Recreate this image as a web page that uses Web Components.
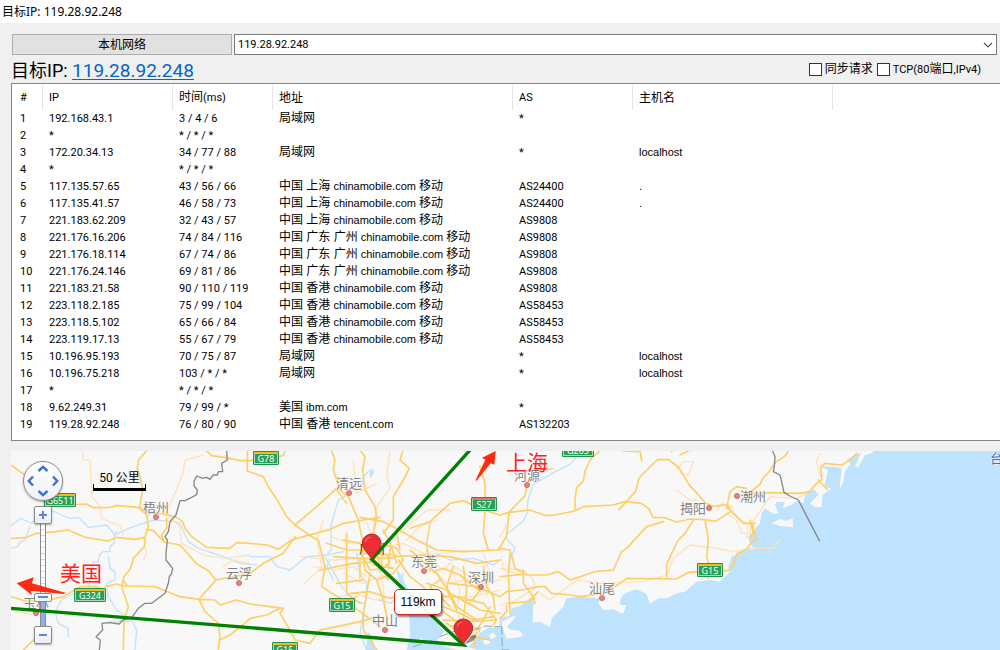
<!DOCTYPE html>
<html lang="zh-CN">
<head>
<meta charset="utf-8">
<title>目标IP: 119.28.92.248</title>
<style>
html, body { margin: 0; height: 100%; }
body { background: #f0f0f0; overflow: hidden; color: #000; font: 12px/16px Roboto, "Noto Sans CJK SC", sans-serif; }
</style>
</head>
<body>
<trace-window heading="目标IP: 119.28.92.248">
  <trace-toolbar slot="tools" address="119.28.92.248"></trace-toolbar>
  <hop-table></hop-table>
  <route-map slot="map">
    <map-shield style="left:242px;top:0" kind="g">G78</map-shield>
    <map-shield style="left:33px;top:42px" kind="g" wide>G6511</map-shield>
    <map-shield style="left:63px;top:137px" kind="g" wide>G324</map-shield>
    <map-shield style="left:318px;top:147px" kind="g">G15</map-shield>
    <map-shield style="left:261px;top:191px" kind="g">G15</map-shield>
    <map-shield style="left:460px;top:46px" kind="s">S27</map-shield>
    <map-shield style="left:551px;top:-8px" kind="g" wide>G205</map-shield>
    <map-shield style="left:686px;top:112px" kind="g">G15</map-shield>
    <map-city style="left:145px;top:66px" side="above">梧州</map-city>
    <map-city style="left:338px;top:42px" side="above">清远</map-city>
    <map-city style="left:516px;top:34px" side="above">河源</map-city>
    <map-city style="left:228px;top:132px" side="above">云浮</map-city>
    <map-city style="left:413px;top:120px" side="above">东莞</map-city>
    <map-city style="left:470px;top:136px" side="above">深圳</map-city>
    <map-city style="left:374px;top:179px" side="above">中山</map-city>
    <map-city style="left:591px;top:147px" side="above">汕尾</map-city>
    <map-city style="left:25px;top:162px" side="above">玉林</map-city>
    <map-city style="left:698px;top:57px" side="left">揭阳</map-city>
    <map-city style="left:726px;top:45px" side="right">潮州</map-city>
  </route-map>
</trace-window>

<script>
const sheet = css => `<style>${css}</style>`;
function define(name, html, setup) {
  customElements.define(name, class extends HTMLElement {
    constructor() {
      super();
      this.attachShadow({ mode: 'open' }).innerHTML = html;
    }
    connectedCallback() { if (setup) setup(this, this.shadowRoot); }
  });
}

/* ---------- Window frame ---------- */
define('trace-window', sheet(`
  :host { display: flex; flex-direction: column; height: 100vh; }
  header { background: #fff; height: 23px; line-height: 24px; padding-left: 2px; flex: none; font-family: "Noto Sans", "Noto Sans CJK SC", sans-serif; }
  main { flex: 1; display: flex; flex-direction: column; min-height: 0; padding: 11px 0 0 11px; }
  .map { flex: 1; display: flex; min-height: 0; padding-top: 10px; }
  ::slotted(route-map) { flex: 1; }
`) + `<header></header><main><slot name="tools"></slot><slot></slot><div class="map"><slot name="map"></slot></div></main>`,
(host, root) => { root.querySelector('header').textContent = host.getAttribute('heading'); });

/* ---------- Toolbar ---------- */
define('trace-toolbar', sheet(`
  :host { display: block; }
  .row { display: flex; align-items: center; }
  .pick { gap: 2px; padding: 0 3px 0 1px; }
  button { box-sizing: border-box; width: 220px; height: 21px; padding: 1px 0 0; border: 1px solid #adadad; background: #e1e1e1;
    font: 12px/18px Roboto, "Noto Sans CJK SC", sans-serif; color: #000; }
  .combo { flex: 1; position: relative; display: flex; }
  select { appearance: none; box-sizing: border-box; width: 100%; height: 21px; border: 1px solid #7a7a7a; border-radius: 0;
    background: #fff; color: #000; font: 11px/18px Roboto, sans-serif; padding: 0 20px 0 3px; }
  .combo svg { position: absolute; right: 4px; top: 8px; pointer-events: none; }
  .target { height: 28px; padding: 0 19px 0 0; }
  .big { flex: 1; font-size: 18px; line-height: 24px; padding-top: 4px; }
  a { font-size: 19px; color: #0066cc; text-decoration: underline; text-decoration-thickness: 1px; text-underline-offset: 2px; }
  label { display: flex; align-items: center; gap: 3px; margin-right: 4px; }
  label:last-child { margin-right: 0; }
  .latin { font-size: 11px; }
  input { appearance: none; box-sizing: border-box; width: 13px; height: 13px; margin: 0; border: 1px solid #333; background: #fff; }
  input:checked { background: #333; }
`) + `
  <div class="row pick">
    <button type="button">本机网络</button>
    <div class="combo">
      <select aria-label="目标IP"><option></option></select>
      <svg width="10" height="6" viewBox="0 0 10 6"><path d="M1 1l4 4 4-4" fill="none" stroke="#555" stroke-width="1.2"/></svg>
    </div>
  </div>
  <div class="row target">
    <div class="big">目标IP: <a href="#target"></a></div>
    <label><input type="checkbox"><span>同步请求</span></label>
    <label><input type="checkbox"><span><span class="latin">TCP(80</span>端口<span class="latin">,IPv4)</span></span></label>
  </div>`,
(host, root) => {
  root.querySelector('option').textContent = root.querySelector('a').textContent = host.getAttribute('address');
});

/* ---------- Hop table ---------- */
const CM = 'chinamobile.com 移动';
const HOPS = [
  ['192.168.43.1', '3 / 4 / 6', '局域网', '*', ''],
  ['*', '* / * / *', '', '', ''],
  ['172.20.34.13', '34 / 77 / 88', '局域网', '*', 'localhost'],
  ['*', '* / * / *', '', '', ''],
  ['117.135.57.65', '43 / 56 / 66', '中国 上海 ' + CM, 'AS24400', '.'],
  ['117.135.41.57', '46 / 58 / 73', '中国 上海 ' + CM, 'AS24400', '.'],
  ['221.183.62.209', '32 / 43 / 57', '中国 上海 ' + CM, 'AS9808', ''],
  ['221.176.16.206', '74 / 84 / 116', '中国 广东 广州 ' + CM, 'AS9808', ''],
  ['221.176.18.114', '67 / 74 / 86', '中国 广东 广州 ' + CM, 'AS9808', ''],
  ['221.176.24.146', '69 / 81 / 86', '中国 广东 广州 ' + CM, 'AS9808', ''],
  ['221.183.21.58', '90 / 110 / 119', '中国 香港 ' + CM, 'AS9808', ''],
  ['223.118.2.185', '75 / 99 / 104', '中国 香港 ' + CM, 'AS58453', ''],
  ['223.118.5.102', '65 / 66 / 84', '中国 香港 ' + CM, 'AS58453', ''],
  ['223.119.17.13', '55 / 67 / 79', '中国 香港 ' + CM, 'AS58453', ''],
  ['10.196.95.193', '70 / 75 / 87', '局域网', '*', 'localhost'],
  ['10.196.75.218', '103 / * / *', '局域网', '*', 'localhost'],
  ['*', '* / * / *', '', '', ''],
  ['9.62.249.31', '79 / 99 / *', '美国 ibm.com', '*', ''],
  ['119.28.92.248', '76 / 80 / 90', '中国 香港 tencent.com', 'AS132203', ''],
];
// Latin runs are set one pixel smaller than the Chinese around them.
const mixed = s => s.replace(/[ -~]*[!-~][ -~]*/g, '<span>$&</span>');

define('hop-table', sheet(`
  :host { display: block; background: #fff; border: 1px solid #828790; border-right: 0; padding: 1px 0 7px; }
  table { border-collapse: separate; border-spacing: 0; table-layout: fixed; width: 100%; }
  th { height: 25px; font-weight: 400; text-align: left; border-right: 1px solid #e5e5e5; }
  th:last-child { border-right: 0; }
  th, td { padding: 0 0 0 6px; white-space: nowrap; overflow: hidden; }
  th:first-child, td:first-child { padding-left: 8px; }
  td { height: 17px; line-height: 17px; }
  span { font-size: 11px; }
  td:nth-child(4), td:nth-child(6) { font-family: "Liberation Sans", "Noto Sans CJK SC", sans-serif; }
`) + `<table>
  <colgroup><col style="width:31px"><col style="width:130px"><col style="width:100px"><col style="width:240px"><col style="width:120px"><col style="width:200px"><col></colgroup>
  <thead><tr>${['#', 'IP', '时间(ms)', '地址', 'AS', '主机名', ''].map(t => `<th>${mixed(t)}</th>`).join('')}</tr></thead>
  <tbody>${HOPS.map((r, i) => `<tr>${[String(i + 1), ...r].map(t => `<td>${mixed(t)}</td>`).join('')}</tr>`).join('')}</tbody>
</table>`);

/* ---------- Map labels ---------- */
define('map-shield', sheet(`
  :host { position: absolute; box-sizing: border-box; width: 26px; height: 14px; border: 1px solid #1e9450; border-radius: 1px;
    background: #27a155; color: #fff; font: 9px/9px "Noto Sans", sans-serif; text-align: center; }
  :host([wide]) { width: 32px; }
  div { border: 1px solid #a8dcb9; border-top: 2px solid #f5b921; height: 9px; }
  :host([kind="s"]) div { border-top-color: #e8717a; }
`) + `<div><slot></slot></div>`);

define('map-city', sheet(`
  :host { position: absolute; width: 0; height: 0; color: #808080; font: 13px/16px "Noto Sans CJK SC", sans-serif; white-space: nowrap;
    text-shadow: 0 0 2px #fff, 0 0 2px #fff; }
  i { position: absolute; box-sizing: border-box; left: -3px; top: -3px; width: 6px; height: 6px; border-radius: 50%; background: #e8857a; border: 1px solid #cf6a62; }
  span { position: absolute; left: -13px; top: -18px; }
  :host([side="left"]) span { left: -29px; top: -8px; }
  :host([side="right"]) span { left: 3px; top: -8px; }
`) + `<i></i><span><slot></slot></span>`);

/* ---------- Map controls ---------- */
define('map-controls', sheet(`
  :host { position: absolute; left: 12px; top: 10px; width: 40px; display: flex; flex-direction: column; align-items: center; }
  .pan { box-sizing: border-box; width: 40px; height: 40px; border: 1px solid #8b8b8b; border-radius: 50%; background: linear-gradient(#fff, #eef0f4);
    display: grid; grid-template: repeat(3, 12px) / repeat(3, 12px); place-content: center; box-shadow: 0 1px 2px #0005; }
  button { padding: 0; border: 0; background: none; display: grid; place-items: center; }
  .n { grid-area: 1 / 2; } .w { grid-area: 2 / 1; } .e { grid-area: 2 / 3; } .s { grid-area: 3 / 2; }
  .w svg { rotate: -90deg; } .e svg { rotate: 90deg; } .s svg { rotate: 180deg; }
  path { fill: none; stroke: #3f6fd8; stroke-width: 2.4; }
  .zoom { box-sizing: border-box; width: 18px; height: 18px; border: 1px solid #8b8b8b; border-radius: 2px; background: linear-gradient(#fff, #eceef2); box-shadow: 0 1px 2px #0005; }
  .in { margin-top: 5px; z-index: 1; }
  .zoom path { stroke: #5a86e0; stroke-width: 2; }
  input { appearance: none; writing-mode: vertical-lr; direction: rtl; width: 18px; height: 102px; margin: 0; 
    background: linear-gradient(#0000 75%, #8fb0ee 75%) center / 4px 100% no-repeat, repeating-linear-gradient(#fff 0 5px, #d5d5d5 5px 6px) center / 4px 100% no-repeat, linear-gradient(#8b8b8b, #8b8b8b) center / 6px 100% no-repeat; }
  input::-webkit-slider-thumb { appearance: none; box-sizing: border-box; width: 18px; height: 9px; border: 1px solid #8b8b8b; border-radius: 2px;
    background: linear-gradient(#5a86e0, #5a86e0) center / 10px 2px no-repeat, #f8f9fb; }
`) + `
  <div class="pan">${['n:向上', 'w:向左', 'e:向右', 's:向下'].map(v => { const [c, t] = v.split(':');
    return `<button type="button" class="${c}" aria-label="${t}"><svg width="12" height="12" viewBox="0 0 12 12"><path d="M1.5 8L6 3.8 10.5 8"/></svg></button>`; }).join('')}</div>
  <button type="button" class="zoom in" aria-label="放大"><svg width="10" height="10" viewBox="0 0 10 10"><path d="M1 5h8M5 1v8"/></svg></button>
  <input type="range" min="0" max="100" value="26" aria-label="缩放级别">
  <button type="button" class="zoom" aria-label="缩小"><svg width="10" height="10" viewBox="0 0 10 10"><path d="M1 5h8"/></svg></button>`);

/* ---------- Map: drawn at three units to the pixel, in four sheets 750 units wide ---------- */
const MAP = `
<svg width="989" height="199" viewBox="33 33 2967 597" fill="none" stroke-linejoin="round" stroke-linecap="round" aria-hidden="true">
  <rect x="33" y="33" width="2967" height="597" fill="#f8f8f8"/>
  <g fill="#bfe3fd">
    <path d="M2960 33h60v607h-60zM1600 600h1400v40h-1400z"/>
    <path d="M1190 388l12 14 18 40 37 28 43 60 32 45-20 25 25 20 30 10h-147l10-45-2-60-20-70-13-35zM1440 578l25-15 35-3v70h-70l-25-10 20-20zM1105 575l12 20 10 35h-30zM1115 85l8 10-10 20-5-10z"/>
    <path d="M1500 532l50-7-5 15-25 25 15 8 18 0 17 20-20 2-20 5-15-4-15 10zM1500 535l28-4 7-26 25-7 30-23 20-5-10 10-2 68 22-3 30 17 5-27 35-35 10-25 35-5 65 5-5 15 15 20 30-2 28 14 12-27-20 0 2-20 13-15 35-12 30 14 10 30 25-17 25 0 30-15 25-5 35-30 40-5 30 5 30-30-5-15 10-30 25-10 30-20-10 0 4 5 16-2-12-18-3-15 35-40 5-30 10-15 25 17 15-2-10-25 5-10 25 2-7 18 27-10 15-12 20 7 8-35 27-5 10 15-25 25 15 12 20-2 3-35 27-20-23-5 13-50-30-12 60 4 10 3-7 65 12-25 5-30 17-25-12-10 25-15 18-7-18 42 10 2 20-37 23-7v-5h372v597h-1500z"/>
  </g>
  <g fill="#f8f8f8"><path d="M2315 250l25-13 15 6 23-8 2 27-40-4zM1505 545l35-18 8 3-28 32 15 8 25 2 10 15-20 6-30 3-8-20zM1468 585l12-8 8 12-14 10zM1450 600l14-4 8 14-20 4zM1258 598l5-5 10 10-6 12z"/></g>

  <g stroke="#bfe3fd" stroke-width="4">
    <path d="M33 257l29-22 33 15 45-45 45 20 25 10 25-3 30 30 55-7 25 30 40-20 75-25 65 5 15 5 25 55 30 20 75 25 50 20 50 5"/>
    <path d="M33 325l20-5 5-12 17-8 15-40M350 275l-8 12 2 20-14 13 0 15-20 0-10 8-5 22-15 0-3 40-10 20-2 45M325 350l5 35 15 10 0 25-25 10 5 40 25 40 45 30 15 30-5 60M250 445l-65 35-20 35 10 35 30 15 0 25M330 545h60M125 170l10 40M440 230l25-20"/>
    <path d="M750 350l60 0 20 30 40 10 50-40 60-5 50-10M1050 160l-35 20-22 75 0 75-18 20 50 90 35 40 30 10M1100 470l0-40-20-30-10-60M1210 400l-15 60-20 30-40-10M1500 360l-20 15-60-20-70 5-40-20M1110 90l-20 20-5 30M1090 520l-10 60 20 50M990 360l-10 20 20 40" />
    <path d="M1740 38l-30 35-50 25-60 35-15 40-5 50-10 20-50 40 0 15 25 25-15 40"/>
  </g>

  <g stroke="#ffe2b8" stroke-width="4">
    <path d="M248 33l2 25 20 4 5 108 25 30 5 35 55 23 10 27M500 225l40 35 5 50 65 35 60 10 80-10M610 45l-55 15-5 35-25 65-30 65M33 510l60 15M430 290l10 50-10 20M670 380l30-20 50 10M190 380l-10 50"/>
    <path d="M1060 60l10 100 60-30M1170 33l-10 70 10 40-40 60-10 60M990 290l60 20 60-10 50 20 50-10 60 30 60 0 70-10M970 240l-20 60 15 80-50 50M900 350l100 10 80-5 40 20M940 380l60 10 60-10 40 30M1030 400l60 30 50-20 60 10M1015 470l50-10 60 20 60-10M1100 250l20 50 20 70 10 80 10 80M1220 300l40-40 50-20M1260 380l50 20 30 30 50-10 60 10 50-10M1290 450l60 20 70 0 80-20M1360 400l20 50-10 60 20 60M1290 360l40 30 20-20 60 40M1450 340l20 60-10 70M1200 280l80-70 70 0"/>
    <path d="M1500 290l20-35M1500 385l70 5 30 30 5 25-65 40-40 10M1620 460l30 20 20-15 60-45 70 10 130-5 70-20 20-50 50-40 80 10 50 10 60-10 60 0 20-25M2030 90l20-25 30 0-15 40-25-5M2180 220l30 20 15 40 25 0 5-30 35-50 20-30 80 5 30-15 30-30 10-10M2460 40l-12 25 14 45M2150 210l15-20 30 10 10 25 40 30-5 40M1505 350l5 40 40 10M2030 150l40 30 20 0"/>
  </g>

  <g stroke="#ffcf66" stroke-width="5">
    <path d="M33 75l27 20 15 10 55 65 70 25 60-3 20 11 50-1 20-5 65 5 30 13 60 10 25 7 18 13 7 20 20 25 45 32 70 3 20-17 40 2 50 5 35 13 40-28 35-10 80-22 40-18 60-10 50-8"/>
    <path d="M440 33l-25 27-3 25 8 25 8 40-10 55 22 20 5 35-10 32-2 28-33 35-8 30-20 25-7 30 20 60-13 40-2 90M33 295l42-2 35-13 55-5 40-5 50 22 70 11 25-11 55 6 30-6M440 268l20 4 32 34 48 9 50 57 35 20 23 28-36 40-15 18 18 37 40 35 5 40-5 40M648 420l102-20 40-30 60-30 35-50M33 470l42 13 60 0 55-13 50-30 50 0 25 10M315 440l35-8 20 6 95 2 75 30 57 8 48 2 15 15 50-15 40 12 60 8 40 5M500 235v30l-15 20 7 21M620 33l15 14 40 5 45 10 30 0 55-4 45-12 5-13M742 33v60l48 17 15 30 30 45 25 45 25 25M100 600l-30 30M660 600l30-15 50-40 10-10 50-10 40-20M385 440l-13-15"/>
    <path d="M885 255l65-55 60-55M995 33l10 27-5 30 20 60 25 20 30 70 10 50 15 40M885 255l50 35 20 10 20 80-10 60 30 20 45 25 60 45 40 30M1082 33l13 17-7 40 7 60 30 50 5 35-10 45M1208 33l-8 27 28 25-18 35-30 50 0 70-30 40M1230 265l60-20 60-55 40-8 60 28 50 15M1440 80l15 50v80l-5 70 15 50M850 505l-10 15 30 50 15 30 45 10 30-40 50-10 70-15 50-15"/>
    <path d="M1085 320l40-15 65 20 20 35-30 40-50 20-35-30zM1085 345l30-10 45 10 10 20-20 20-40 5zM1030 300l50 10 30 30M1040 280l0 180 40 30M1000 350l85 5 80 0 25-5 80-5 80 5 80 20 70-10M1080 232l70 13 30 15 70 40 60 30 80 5 110-5M960 390l100-20 60-5M980 310l60 20 60 0M1110 400l-10 60-10 60 0 50 40 60M1130 420l20 60 10 50M1050 460l60-5 60 20 40-10M1010 430l80-10M1150 270l20 40 20 60M1195 360l35 50 40 30 40 60 40 30 40 30M1230 330l80 70 40 60 90 50 60 10M1200 330l-10-50M1145 320l0 60 20 40M1170 325l-5 60M1130 315l10 80M1110 340l80 5M1120 375l60 10M1000 500l70-30M1080 360l0 55"/>
    <path d="M1390 380l10 70-10 90-5 40M1350 430l80 10 70 30M1310 470l60 0 80 20 40 50-10 15M1330 540l80 5 80-5M1280 430l60 20 30 60M1360 380l-20 60 30 60 60 40M1420 400l20 50-30 40M1330 500l50 20 40 20 60-10M1340 550l30 20 30-20 40 20-20 20 5 30M1380 600l40-10 50 10M1300 395l30-10 50 20 60 50M1320 420l-30 20 60 60M1450 380l10 60 20 30 5 40M1350 560l80-20M1430 570l20-30 20-40"/>
    <path d="M1500 225l27-8 48-50 8-40 45-40 30 0M1527 217l-7 70-20 35M1527 217l62-7 50 17 25-2 60-12 25-13 90-5 35-10 50 5 22 15 13 27 36 1 35 13 40-9 42 2 35 5 45-30-10-20-45 5-20-10-50-55-30-50-30-25-35 0-55 55-10 40-50 55M1920 33l5 30M1870 33l45 2M1800 33l-25 20-20 40-5 30-20 20-5 35 0 35M1990 245l-50 15-60 65-15 10-25 55-55 5-75 25-35-25-35 10-60 0-35-20-5-20-10-35-35-5M1570 390l0 40 30 40 5 20M1500 410l70-7M1500 470l20-15 45-5 50-10 20 0 20 20 55 5 35 5 55-10M1500 535l20-20 0-20M1525 490l60-5 30-30M1530 340l-5 60 5 120M1845 440l35-25 150 2 35-20 60-5 60 0 15-15 10-35 30-15 15-20 15-10-15-50M2115 240l10 60-5 50 10 30-5 15M2080 240l-25 40-20 20-20 40-15 35v40M2250 295l10-15-10-40M2180 205l10-50 20-15 30 5M2125 400v15M2070 30l-30 15M2015 35l0-5M2185 205l45 45 35 0M2365 33l-10 15-30 20-20 30-15 15-10 20-25 20M2250 160l70-2 80 2 30-5 20-25 15-10-2-40 12-10 50 5 25-15 20-20M2455 120l27 28"/>
    <path d="M1040 190l-30-40M1300 380l-20-50M1290 250l-10 60 10 80" stroke-width="4"/>
  </g>

  <g stroke="#888" stroke-width="4">
    <path d="M680 33l2 27-17 10 3 25-13 0-3 10-12 0-10 13-10-6-12 3-18-7-8 17 0 12 10 13-2 14-15 8-20 10-15 0-7 25-5 18-18 20-5 30-10 15 7 10-4 40 0 20 20 25-3 15-7 10-3 20-10 30-40 30-20 0-20 15-7 10-15 20-25 5-10 12-30-4-22 2 2 20-20 20 13 10-3 30"/>
    <path d="M2318 33l7 17-2 30-3 15 20 10 5 20 7 32 18 11 25 12 63 122"/>
    <path d="M1320 590l40-15 60-5 35-12 45 2M1505 560l2 70 20 0M1240 620l60-20" stroke="#8fa8b8" stroke-dasharray="24 10" stroke-width="3"/>
  </g>
</svg>`;

const PIN = `<path d="M0 0C-8-17-28-29-28-49a28 27 0 0 1 56 0C28-29 8-17 0 0z" fill="#ee2d33" stroke="#a82a2a" stroke-width="3"/><path d="M-19-52q3-13 14-15" fill="none" stroke="#f77" stroke-width="3"/>`;

define('route-map', sheet(`
  :host { display: block; position: relative; overflow: hidden; background: #bfe3fd; }
  svg { position: absolute; left: 0; top: 0; }
  .label { position: absolute; white-space: nowrap; }
  .gz { left: 348px; top: 89px; font: 13px/16px "Noto Sans CJK SC", sans-serif; color: #333; }
  .sea { left: 979px; top: -1px; font: 13px/16px "Noto Sans CJK SC", sans-serif; color: #3a6fc0; text-shadow: 0 0 2px #fff, 0 0 2px #fff; }
  .note { font: 21px/24px "Noto Sans CJK SC", sans-serif; color: #f22; }
  .distance { left: 383px; top: 138px; box-sizing: border-box; width: 48px; height: 26px; border: 1px solid #d9201c; border-radius: 5px;
    background: #fffffff0; font: 12px/24px "Liberation Sans", sans-serif; text-align: center; box-shadow: 1px 2px 2px #0007; }
  .scale { left: 82px; top: 19px; width: 53px; text-align: center; line-height: 16px; text-shadow: 0 0 1px #fff; }
  .scale i { display: block; box-sizing: border-box; height: 7px; margin-top: -2px; border: 1px solid #000; border-top: 0; border-bottom-width: 3px; }
`) + MAP + `
  <span class="label gz">广州</span>
  <span class="label sea">台</span>
  <slot></slot>
  <map-controls></map-controls>
  <svg width="989" height="199" viewBox="33 33 2967 597" aria-hidden="true">
    <path d="M1412 28L1115 358 1390 615 33 505" fill="none" stroke="#008000" stroke-width="10"/>
    <path d="M1394 612l22-26q18-4 12 6-6 14-34 20" fill="#0006"/>
    <g transform="translate(1115 358)">${PIN}</g>
    <g transform="translate(1390 613)">${PIN}</g>
    <path d="M1487 33L1483 74 1472 70 1429 123 1427 120 1456 59 1446 53z" fill="#ff2a12"/>
    <path d="M50 430L101 412 96 430 198 459 190 462 92 452 96 466z" fill="#ff2a12"/>
  </svg>
  <span class="label note" style="left:495px;top:-2px">上海</span>
  <span class="label note" style="left:49px;top:109px">美国</span>
  <div class="label distance">119km</div>
  <div class="label scale">50 公里<i></i></div>`);
</script>
</body>
</html>
